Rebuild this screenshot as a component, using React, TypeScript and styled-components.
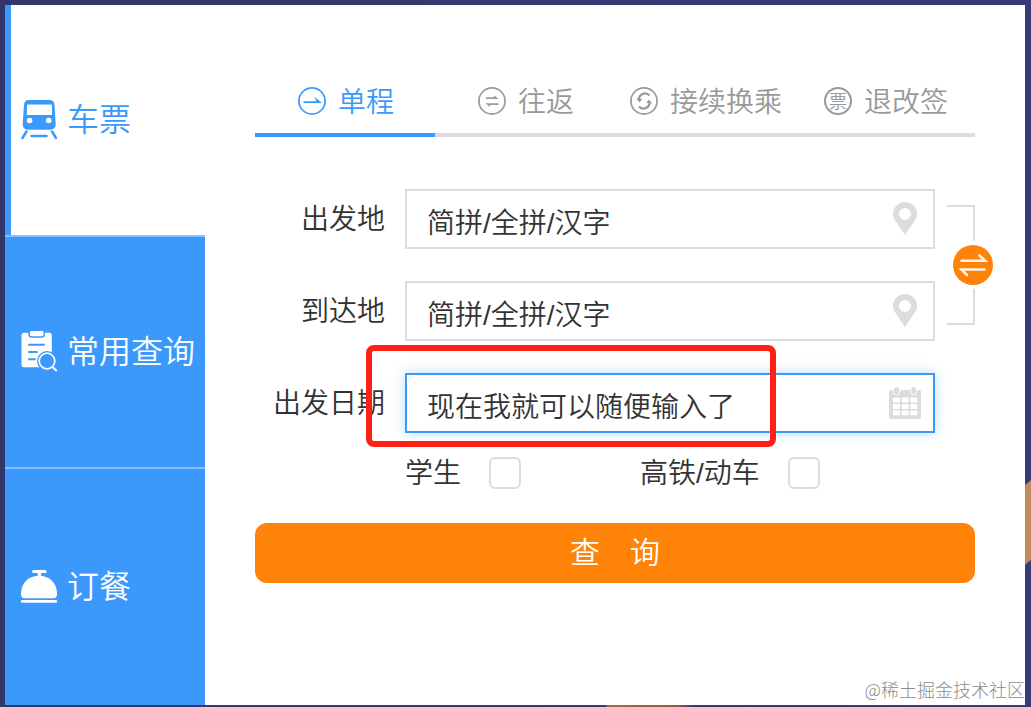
import React, { useState } from "react";
import styled, { createGlobalStyle, css } from "styled-components";

const blue = "#3b99fc";
const orange = "#ff8209";
const line = "#dcdcdc";

const GlobalStyle = createGlobalStyle`
  *, *::before, *::after { box-sizing: border-box; }
  body {
    margin: 0;
    font-family: "Liberation Sans", "Noto Sans CJK SC", sans-serif;
    font-weight: 350;
    color: #333;
  }
  button, input {
    font: inherit;
    color: inherit;
    margin: 0;
  }
  svg { display: block; flex: none; }
`;

const Page = styled.div`
  display: flex;
  min-height: 100vh;
  padding: 5px 6px 2px 5px;
  background:
    linear-gradient(140deg, transparent 5px, #c08a5c 6px, #c08a5c 66px, transparent 67px) right 478px / 6px 87px no-repeat,
    linear-gradient(90deg, transparent, #a8683f 3%, #965a3c 80%, transparent) 605px bottom / 90px 2px no-repeat,
    linear-gradient(90deg, #32366a, #353c78);
`;

const Panel = styled.main`
  position: relative;
  flex: 1;
  display: flex;
  min-width: 0;
  background: #fff;
`;

const Sidebar = styled.nav`
  display: flex;
  flex-direction: column;
  flex: none;
  width: 200px;
  background: ${blue};
`;

const SideLink = styled.a<{ $active?: boolean }>`
  display: flex;
  align-items: center;
  gap: 10px;
  min-height: 232px;
  padding-left: 16px;
  border-top: 2px solid #85bffc;
  font-size: 32px;
  line-height: 40px;
  color: #fff;
  text-decoration: none;
  white-space: nowrap;
  &:last-child { flex: 1; }
  ${(p) =>
    p.$active &&
    css`
      min-height: 230px;
      padding-left: 10px;
      border-top: 0;
      border-left: 6px solid ${blue};
      background: #fff;
      color: ${blue};
    `}
`;

const Content = styled.section`
  flex: 1;
  min-width: 0;
  padding: 60px 50px;
`;

const Tabs = styled.div`
  display: flex;
`;

const Tab = styled.button<{ $active: boolean }>`
  flex: 1;
  display: flex;
  align-items: center;
  justify-content: center;
  gap: 12px;
  height: 72px;
  padding: 4px 0 0 2px;
  border: 0;
  border-bottom: 4px solid ${(p) => (p.$active ? blue : line)};
  background: none;
  color: ${(p) => (p.$active ? blue : "#999")};
  font-size: 28px;
  line-height: 40px;
  white-space: nowrap;
  cursor: pointer;
`;

const TabText = styled.span`
  padding-top: 4px;
`;

const TicketMark = styled.span`
  display: flex;
  align-items: center;
  justify-content: center;
  width: 28px;
  height: 28px;
  border: 2px solid #999;
  border-radius: 50%;
  font-size: 18px;
  line-height: 18px;
  padding-top: 2px;
`;

const Form = styled.form`
  margin-top: 52px;
`;

const Stations = styled.div`
  display: flex;
  align-items: center;
`;

const Rows = styled.div`
  flex: 1;
  display: grid;
  gap: 32px;
`;

const Row = styled.div`
  position: relative;
  display: flex;
  gap: 20px;
`;

const DateRow = styled(Row)`
  margin: 32px 40px 0 0;
`;

const Label = styled.label`
  flex: none;
  width: 130px;
  height: 60px;
  padding-top: 1px;
  font-size: 28px;
  line-height: 60px;
  text-align: right;
`;

const Field = styled.div<{ $focus?: boolean }>`
  flex: 1;
  display: flex;
  align-items: center;
  min-width: 0;
  height: 60px;
  border: 2px solid ${(p) => (p.$focus ? blue : line)};
  box-shadow: ${(p) => (p.$focus ? "0 0 12px rgba(59, 153, 252, 0.35)" : "none")};
`;

const TextInput = styled.input`
  flex: 1;
  min-width: 0;
  height: 56px;
  padding: 3px 0 0 20px;
  border: 0;
  outline: 0;
  background: none;
  font-size: 28px;
`;

const FieldIcon = styled.span`
  display: flex;
  flex: none;
  justify-content: center;
  width: 56px;
  color: ${line};
`;

const Bracket = styled.div`
  position: relative;
  flex: none;
  width: 28px;
  height: 120px;
  margin-left: 12px;
  border: 2px solid ${line};
  border-left: 0;
`;

const SwapButton = styled.button`
  position: absolute;
  top: 38px;
  right: -20px;
  width: 40px;
  height: 40px;
  padding: 0;
  border: 0;
  border-radius: 50%;
  background: ${orange};
  box-shadow: 0 0 0 4px #fff;
  cursor: pointer;
`;

const Highlight = styled.div`
  position: absolute;
  top: -28px;
  bottom: -14px;
  left: 111px;
  right: 159px;
  border: 6px solid #ff2015;
  border-radius: 8px;
  pointer-events: none;
`;

const Options = styled.div`
  display: grid;
  grid-template-columns: 235px 1fr;
  margin: 24px 40px 0 150px;
`;

const Option = styled.label`
  display: flex;
  align-items: center;
  gap: 28px;
  height: 32px;
  font-size: 28px;
  line-height: 32px;
  white-space: nowrap;
`;

const OptionText = styled.span`
  padding-top: 2px;
`;

const Checkbox = styled.input`
  appearance: none;
  flex: none;
  width: 32px;
  height: 32px;
  border: 2px solid ${line};
  border-radius: 6px;
  background: #fff;
  &:checked {
    background: ${blue};
    border-color: ${blue};
  }
`;

const Submit = styled.button`
  display: block;
  width: 100%;
  height: 60px;
  margin-top: 34px;
  padding: 0;
  border: 0;
  border-radius: 12px;
  background: ${orange};
  color: #fff;
  font-size: 30px;
  line-height: 60px;
  cursor: pointer;
`;

const Watermark = styled.span`
  position: absolute;
  right: 0;
  bottom: 3px;
  color: #8c8c8c;
  font-family: "Noto Sans CJK SC", sans-serif;
  font-weight: 300;
  font-size: 18px;
  line-height: 26px;
`;

const TrainIcon = () => (
  <svg width="36" height="40" viewBox="0 0 36 40" fill="currentColor">
    <path
      fillRule="evenodd"
      d="M7.500 0h21q4.600 0 5 5l1.200 19q.2 5.700-5.700 5.700H7Q1.400 29.700 1.700 24L3 5Q3.300 0 7.500 0zM7 4.600Q6 4.600 6 5.600L5.800 15H31V5.600q0-1-1-1zM8.600 17.700a2.800 2.800 0 1 0 0 5.600 2.800 2.800 0 0 0 0-5.600zM27.700 17.700a2.800 2.800 0 1 0 0 5.600 2.800 2.800 0 0 0 0-5.600z"
    />
    <path d="M5.500 31.500l-4 6.500M31 31.500l4 6.500M10.500 36h15" fill="none" stroke="currentColor" strokeWidth="2.500" strokeLinecap="round" />
  </svg>
);

const OrderSearchIcon = () => (
  <svg width="36" height="42" viewBox="0 0 36 42" fill="none">
    <rect x="0.500" y="1.700" width="30.300" height="34.500" rx="2.500" fill="#fff" />
    <rect x="8.200" y="-1" width="15" height="7" rx="2.500" fill="#fff" stroke={blue} strokeWidth="1.600" />
    <rect x="9" y="0" width="13.500" height="5" rx="2" fill="#fff" />
    <path d="M7.200 13.700h16.500M7.200 21h9.500M7.200 28.200h7.500" stroke={blue} strokeWidth="2" />
    <circle cx="26" cy="30" r="10" fill={blue} />
    <circle cx="26" cy="30" r="7.800" stroke="#fff" strokeWidth="1.700" />
    <path d="M31.500 36l4.300 4" stroke="#fff" strokeWidth="2" />
  </svg>
);

const BellIcon = () => (
  <svg width="36" height="34" viewBox="0 0 36 34" fill="#fff">
    <rect x="11" y="0" width="14.500" height="3" rx="1.500" />
    <path d="M16.700 2h3.400v5h-3.400z" />
    <path d="M0 23C.5 12 8.500 5.800 18 5.800S35.500 12 36 23v1q0 4.200-3.500 4.200h-29Q0 28.200 0 24z" />
    <rect x="0" y="30" width="36" height="2.800" rx="1" />
  </svg>
);

const RoundIcon = ({ children }: { children: React.ReactNode }) => (
  <svg width="28" height="28" viewBox="0 0 28 28" fill="none">
    <circle cx="14" cy="14" r="13.100" stroke="currentColor" strokeWidth="1.700" />
    {children}
  </svg>
);

const OneWayIcon = () => (
  <RoundIcon>
    <path d="M16 9.400l8 6.700H5.500v-1.800h13z" fill="currentColor" />
  </RoundIcon>
);

const RoundTripIcon = () => (
  <RoundIcon>
    <path d="M16 8.300l4.700 3.600H8v-1.700h8zM12 20l-4.500-3.800H20.300v1.700H12z" fill="currentColor" />
  </RoundIcon>
);

const TransferIcon = () => (
  <RoundIcon>
    <path d="M9 13A6 6 0 0 1 19.500 8.500M19.500 15A6 6 0 0 1 9 19.500" stroke="currentColor" strokeWidth="2.200" />
    <path d="M6.300 11.500l6 .5-2.800 3.500zM22.200 16.500l-6-.5 2.800-3.500z" fill="currentColor" />
  </RoundIcon>
);

const PinIcon = () => (
  <svg width="24" height="34" viewBox="0 0 24 34" fill="currentColor">
    <path
      fillRule="evenodd"
      d="M12 0a12 12 0 0 1 12 12c0 2.500-1 4.800-2.500 7L12 33 2.500 19C1 16.800 0 14.500 0 12A12 12 0 0 1 12 0zm0 6.100a6 6 0 1 0 0 12 6 6 0 0 0 0-12z"
    />
  </svg>
);

const CalendarIcon = () => (
  <svg width="32" height="32" viewBox="0 0 32 32" fill="currentColor">
    <rect x="0" y="3" width="32" height="29" rx="2" />
    <g stroke="#fff" strokeWidth="1">
      <rect x="4.500" y="-0.500" width="6" height="8.500" rx="3" />
      <rect x="21.700" y="-0.500" width="6" height="8.500" rx="3" />
    </g>
    <path
      fill="#fff"
      d="M4 10.500h7V15.500H4zM12.700 10.500h7V15.500h-7zM21.300 10.500h7V15.500h-7zM4 17h7v5H4zM12.700 17h7v5h-7zM21.300 17h7v5h-7zM4 23.500h7V28.300H4zM12.700 23.500h7V28.300h-7zM21.300 23.500h7V28.300h-7z"
    />
  </svg>
);

const SwapIcon = () => (
  <svg width="40" height="40" viewBox="0 0 40 40" fill="none" stroke="#fff5ea" strokeWidth="2.600" strokeLinecap="round">
    <path d="M8.500 15.800H32l-5.500-5.300M31.500 24.500H8.500l5.500 5.500" />
  </svg>
);

const sideItems = [
  { text: "车票", icon: <TrainIcon />, active: true },
  { text: "常用查询", icon: <OrderSearchIcon /> },
  { text: "订餐", icon: <BellIcon /> },
];

const tabItems = [
  { text: "单程", icon: <OneWayIcon /> },
  { text: "往返", icon: <RoundTripIcon /> },
  { text: "接续换乘", icon: <TransferIcon /> },
  { text: "退改签", icon: <TicketMark aria-hidden>票</TicketMark> },
];

const stationHint = "简拼/全拼/汉字";

export default function App() {
  const [tab, setTab] = useState(0);
  const [from, setFrom] = useState(stationHint);
  const [to, setTo] = useState(stationHint);

  const swap = () => {
    setFrom(to);
    setTo(from);
  };

  return (
    <>
      <GlobalStyle />
      <Page>
        <Panel>
          <Sidebar>
            {sideItems.map((item) => (
              <SideLink key={item.text} href="#" $active={item.active}>
                {item.icon}
                {item.text}
              </SideLink>
            ))}
          </Sidebar>
          <Content>
            <Tabs role="tablist">
              {tabItems.map((item, i) => (
                <Tab key={item.text} type="button" role="tab" aria-selected={tab === i} $active={tab === i} onClick={() => setTab(i)}>
                  {item.icon}
                  <TabText>{item.text}</TabText>
                </Tab>
              ))}
            </Tabs>
            <Form onSubmit={(e) => e.preventDefault()}>
              <Stations>
                <Rows>
                  <Row>
                    <Label htmlFor="from">出发地</Label>
                    <Field>
                      <TextInput id="from" value={from} onChange={(e) => setFrom(e.target.value)} />
                      <FieldIcon><PinIcon /></FieldIcon>
                    </Field>
                  </Row>
                  <Row>
                    <Label htmlFor="to">到达地</Label>
                    <Field>
                      <TextInput id="to" value={to} onChange={(e) => setTo(e.target.value)} />
                      <FieldIcon><PinIcon /></FieldIcon>
                    </Field>
                  </Row>
                </Rows>
                <Bracket>
                  <SwapButton type="button" aria-label="交换" onClick={swap}>
                    <SwapIcon />
                  </SwapButton>
                </Bracket>
              </Stations>
              <DateRow>
                <Label htmlFor="date">出发日期</Label>
                <Field $focus>
                  <TextInput id="date" defaultValue="现在我就可以随便输入了" />
                  <FieldIcon><CalendarIcon /></FieldIcon>
                </Field>
                <Highlight />
              </DateRow>
              <Options>
                <Option>
                  <OptionText>学生</OptionText>
                  <Checkbox type="checkbox" />
                </Option>
                <Option>
                  <OptionText>高铁/动车</OptionText>
                  <Checkbox type="checkbox" />
                </Option>
              </Options>
              <Submit type="submit">查　询</Submit>
            </Form>
          </Content>
          <Watermark>@稀土掘金技术社区</Watermark>
        </Panel>
      </Page>
    </>
  );
}
